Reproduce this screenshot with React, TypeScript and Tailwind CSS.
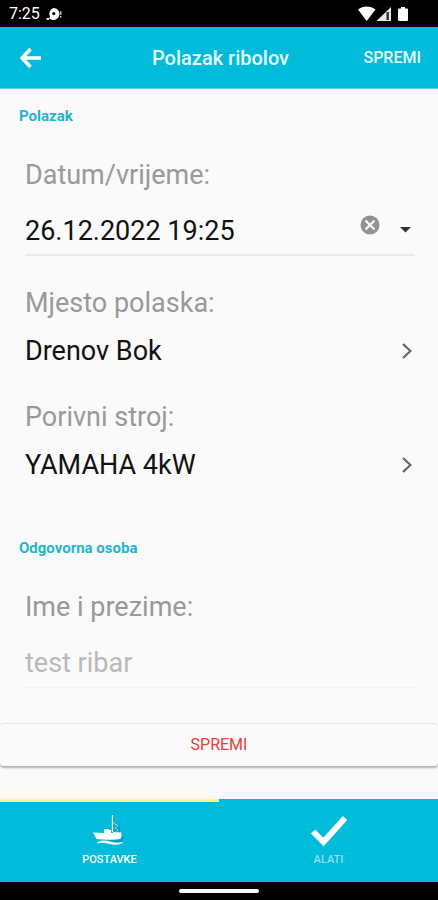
import React, { useState } from 'react';

function ChatBadge() {
  return (
    <svg width="16" height="14" viewBox="0 0 16 14" aria-hidden="true">
      <path d="M7.500 1a6 6 0 1 1-3 11.200L3 11.500 4 9.500A6 6 0 0 1 7.500 1Z" fill="#fff" />
      <path d="M.5 11h2.500v2H.5z" fill="#ddd" />
      <circle cx="7.8" cy="6.6" r="1.6" fill="#000" />
      <path d="M14 4.200h1.500v3.600H14zM14 9h1.500v1.400H14z" fill="#bbb" />
    </svg>
  );
}

function StatusIcons() {
  return (
    <svg width="52" height="16" viewBox="0 0 52 16" aria-hidden="true">
      <path d="M0 3.600C5-.4 12.500-.4 17.500 3.600L8.700 15Z" fill="#fff" />
      <path d="M33 1v14H18.500Z" fill="#e8e8e8" />
      <path d="M28.500 6h2.400v8h-2.400z" fill="#333" />
      <path d="M41 2.500h2V1h4v1.500h2a1 1 0 0 1 1 1V14a1 1 0 0 1-1 1h-8a1 1 0 0 1-1-1V3.500a1 1 0 0 1 1-1Z" fill="#fff" />
    </svg>
  );
}

function BackArrow() {
  return (
    <svg width="22" height="22" viewBox="0 0 22 22" fill="none" stroke="#fff" strokeWidth="3.4" aria-hidden="true">
      <path d="M10.500 2 2 11l8.500 9M2.500 11H21" strokeLinejoin="round" />
    </svg>
  );
}

function Chevron() {
  return (
    <svg width="12" height="16" viewBox="0 0 12 16" fill="none" stroke="#616161" strokeWidth="2" aria-hidden="true">
      <path d="m2 1 7.500 7L2 15" />
    </svg>
  );
}

function Boat() {
  return (
    <svg width="36" height="34" viewBox="0 0 36 34" aria-hidden="true">
      <g fill="#155e6b" opacity="0.3" transform="translate(1.500 1.500)">
        <path d="M20 3h1v13h-1zM22 8l5 4-1 7h-5zM4 20l26 1-1 6-20-1Z" />
      </g>
      <path d="M20.500 1v17" fill="none" stroke="#fff" strokeWidth="1.2" />
      <path d="m24 10 2 2-3 2 3 2-2 2M21 8l3 3" fill="none" stroke="#a5e6ee" strokeWidth="0.8" />
      <path d="M1 18.500l11 .5v-4h5v1l2-.3V19h2v-1l8.500.5-.5 2 .8.500-1.300 4c-6 1-18 1-24 0L2.500 21Z" fill="#fff" />
      <path d="M5 29c5-3 9-2.500 14-1 5 1.300 8 1.300 12 .3-5 3-9 2.500-14 1.200-5-1.200-8-1.500-12-.5Z" fill="#fff" stroke="#fff" strokeWidth="0.6" />
    </svg>
  );
}

function Check() {
  return (
    <svg width="38" height="34" viewBox="0 0 38 34" fill="none" stroke="#fff" strokeWidth="6" aria-hidden="true">
      <path d="M3 17.500 13.500 28 35 4" />
    </svg>
  );
}

interface LinkRowProps {
  label: string;
  value: string;
}

function LinkRow({ label, value }: LinkRowProps) {
  return (
    <button type="button" className="block w-full pr-0.5 text-left">
      <span className="block text-[27px] leading-8 text-[#999]">{label}</span>
      <span className="mt-4 flex items-center justify-between text-[27px] leading-8 text-[#111]">
        {value}
        <Chevron />
      </span>
    </button>
  );
}

export default function App() {
  const [date, setDate] = useState('26.12.2022 19:25');
  const [tab, setTab] = useState('postavke');

  return (
    <div className="flex min-h-screen flex-col bg-[#fafafa] font-[Roboto,sans-serif]">
      {/* Status bar */}
      <div className="flex h-[27px] items-center justify-between bg-black pr-7 pl-[9px] text-white">
        <div className="flex items-center gap-1.5 text-base">
          <span>7:25</span>
          <ChatBadge />
        </div>
        <StatusIcons />
      </div>

      <header className="grid h-[62px] grid-cols-[1fr_auto_1fr] items-center border-b border-[#5fd0e0] bg-[#00bcda] pr-[17px] pl-5 text-[#e8fafc]">
        <button type="button" aria-label="Natrag" className="justify-self-start">
          <BackArrow />
        </button>
        <h1 className="text-xl font-medium">Polazak ribolov</h1>
        <button type="button" className="justify-self-end text-base font-medium">SPREMI</button>
      </header>

      <main className="flex-1">
        <section className="pt-[17px] pr-[17px] pl-[19px]">
          <h2 className="text-[15px] leading-5 font-bold text-[#1fb5cf]">Polazak</h2>
          <div className="px-[6px] pt-[33px]">
            <label htmlFor="datum" className="block text-[27px] leading-8 text-[#999]">Datum/vrijeme:</label>
            <div className="mt-5 flex h-[45px] items-start border-b-2 border-[#e9e9e9]">
              <input
                id="datum"
                value={date}
                onChange={e => setDate(e.target.value)}
                className="h-10 min-w-0 flex-1 bg-transparent text-[27px] text-[#111] outline-none"
              />
              <button type="button" aria-label="Obriši" onClick={() => setDate('')} className="mt-1">
                <svg width="20" height="20" viewBox="0 0 20 20" aria-hidden="true">
                  <circle cx="10" cy="10" r="9.5" fill="#929292" />
                  <path d="m5.500 5.500 9 9m0-9-9 9" stroke="#fafafa" strokeWidth="2.4" />
                </svg>
              </button>
              <button type="button" aria-label="Odaberi" className="mt-4 mr-1 ml-5">
                <svg width="11" height="6" viewBox="0 0 11 6" aria-hidden="true">
                  <path d="M0 0h11L5.500 5.500Z" fill="#333" />
                </svg>
              </button>
            </div>
            <div className="flex flex-col gap-[34px] pt-[31px]">
              <LinkRow label="Mjesto polaska:" value="Drenov Bok" />
              <LinkRow label="Porivni stroj:" value="YAMAHA 4kW" />
            </div>
          </div>
        </section>

        <section className="pt-[57px] pr-[17px] pl-[19px]">
          <h2 className="text-[15px] leading-5 font-bold text-[#1fb5cf]">Odgovorna osoba</h2>
          <div className="px-[6px] pt-[33px]">
            <label htmlFor="ime" className="block text-[27px] leading-8 text-[#999]">Ime i prezime:</label>
            <input
              id="ime"
              readOnly
              value="test ribar"
              className="mt-5 h-[45px] w-full border-b border-[#f2f2f2] bg-transparent pb-1 text-[27px] text-[#b9b9b9] outline-none"
            />
          </div>
        </section>

        <button
          type="button"
          className="mt-[35px] block h-[43px] w-full rounded-sm border-t border-[#e4e4e4] text-base text-[#ee3a3a] shadow-[0_2px_2px_#b0b0b0]"
        >
          SPREMI
        </button>
      </main>

      <nav className="grid h-[83px] grid-cols-2 bg-[#00bcda] text-[11px] font-medium text-white">
        <button
          type="button"
          onClick={() => setTab('postavke')}
          className={`flex flex-col items-center border-t-3 pt-3 ${tab === 'postavke' ? 'border-[#fbf88c]' : 'border-transparent opacity-70'}`}
        >
          <Boat />
          <span className="mt-1 leading-4">POSTAVKE</span>
        </button>
        <button
          type="button"
          onClick={() => setTab('alati')}
          className={`flex flex-col items-center border-t-3 pt-3 ${tab === 'alati' ? 'border-[#fbf88c]' : 'border-transparent'}`}
        >
          <Check />
          <span className={`mt-1 leading-4 ${tab === 'alati' ? '' : 'text-[#8be0ec]'}`}>ALATI</span>
        </button>
      </nav>

      {/* Gesture bar */}
      <div className="flex h-[18px] items-center justify-center bg-black">
        <div className="h-1 w-20 rounded-full bg-white" />
      </div>
    </div>
  );
}
